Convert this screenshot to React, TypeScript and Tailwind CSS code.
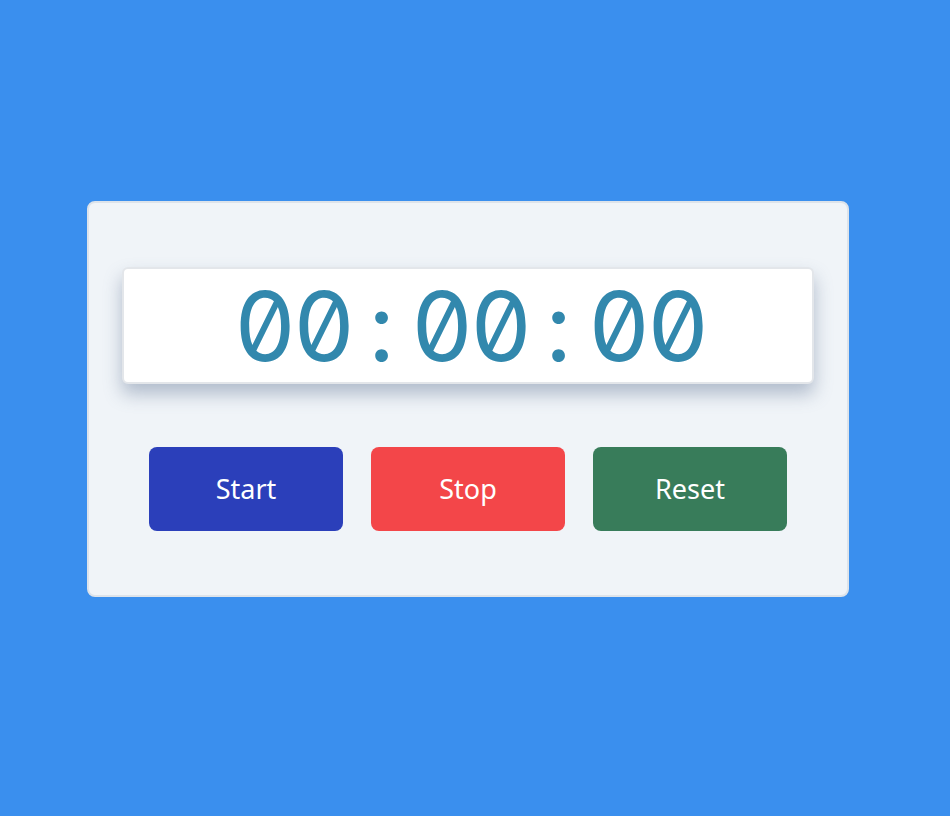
const digits = '00:00:00'.split('');

export default function App() {
  return (
    <div className="min-h-screen w-full bg-[#3a8fee] flex items-center justify-center pr-[14px] pb-[18px]">
      <div className="w-[762px] rounded-lg border-2 border-[#dde3ea] bg-[#f0f4f8] px-[33px] pt-[64px] pb-[64px]">
        <div className="h-[117px] rounded-md border-2 border-[#e3e6ea] bg-white shadow-[0_10px_18px_rgba(100,120,150,0.45)] flex items-center justify-center">
          <div className="flex pl-[4px] font-['Inter',sans-serif] text-[96px] leading-none text-[#3288ad] slashed-zero tabular-nums">
            {digits.map((ch, i) => (
              <span key={i} className="w-[59px] text-center">
                {ch}
              </span>
            ))}
          </div>
        </div>
        <div className="mt-[63px] flex justify-center gap-[28px] font-['Noto_Sans','Open_Sans',sans-serif] text-[27px] text-white">
          <button className="w-[194px] h-[84px] rounded-lg bg-[#2b3fba]">Start</button>
          <button className="w-[194px] h-[84px] rounded-lg bg-[#f34649]">Stop</button>
          <button className="w-[194px] h-[84px] rounded-lg bg-[#387c5a]">Reset</button>
        </div>
      </div>
    </div>
  );
}
